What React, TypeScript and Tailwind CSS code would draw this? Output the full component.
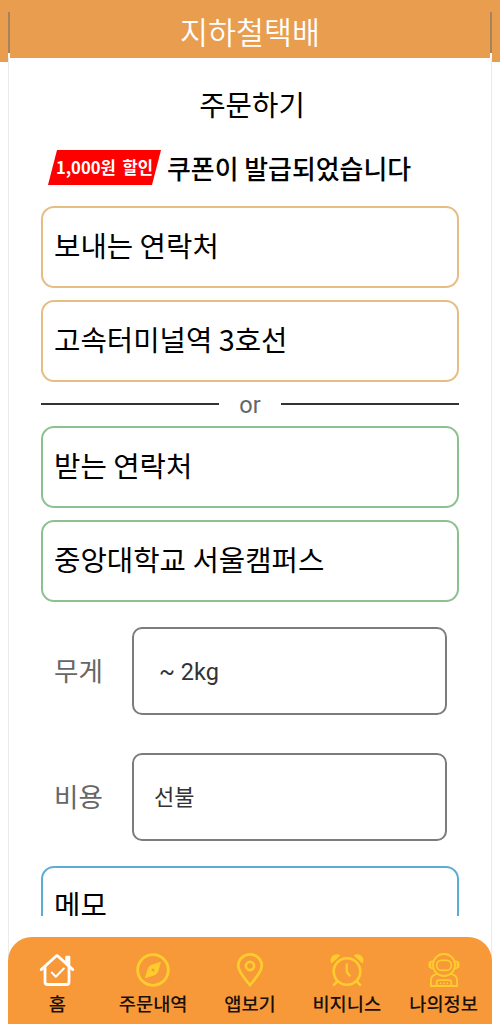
import React from 'react'
import { clsx } from 'clsx'

interface FieldProps {
  text: string
  className?: string
}

const Field: React.FC<FieldProps> = ({ text, className }) => (
  <div
    className={clsx(
      'flex h-[82px] shrink-0 items-center rounded-[13px] border-2 pb-[3px] pl-[11px] text-[28.7px] leading-none text-black',
      className
    )}
  >
    <span>{text}</span>
  </div>
)

interface OptionRowProps {
  label: string
  children: React.ReactNode
}

const OptionRow: React.FC<OptionRowProps> = ({ label, children }) => (
  <div className="flex h-[88px] items-center">
    <div className="w-[91px] pb-0.5 pl-[13px] text-[26.5px] leading-none text-[#666]">{label}</div>
    <div className="flex h-full w-[315px] items-center rounded-[10px] border-2 border-[#7c7c7c] text-[#333]">
      {children}
    </div>
  </div>
)

const HomeIcon = () => (
  <svg width="36" height="36" viewBox="0 0 36 36" fill="none" stroke="white" strokeLinecap="round" strokeLinejoin="round">
    <path d="M2.2 17.6 17 4.2a1.5 1.5 0 0 1 2 0L33.8 17.6" strokeWidth="2.8" />
    <path d="M6 15.5V30a2.5 2.5 0 0 0 2.5 2.5h19A2.5 2.5 0 0 0 30 30V15.5" strokeWidth="2.8" />
    <path d="M27.4 10V4.8h2.8v9" fill="white" strokeWidth="2.2" />
    <path d="m12.8 20.5 4 4.2 8-8.2" strokeWidth="2" />
  </svg>
)

const CompassIcon = () => (
  <svg width="36" height="36" viewBox="0 0 36 36" fill="none" stroke="#fdcc2d" strokeLinejoin="round">
    <circle cx="18" cy="18" r="15.3" strokeWidth="2.8" />
    <path
      d="M25.5 10.3 16.2 13.3a5 5 0 0 0-2.8 2.8L10.5 25.7l9.3-3a5 5 0 0 0 2.8-2.8z M18 16.1a1.9 1.9 0 1 0 0 3.8 1.9 1.9 0 0 0 0-3.8z"
      fill="#fdcc2d"
      fillRule="evenodd"
      strokeWidth="0.9"
    />
  </svg>
)

const PinIcon = () => (
  <svg width="36" height="36" viewBox="0 0 36 36" fill="none" stroke="#fdcc2d" strokeLinejoin="round">
    <path d="M18 33.2C14.5 28.5 6.2 20.2 6.2 13.8a11.8 11.4 0 0 1 23.6 0c0 6.4-8.3 14.7-11.8 19.4z" strokeWidth="2.7" />
    <circle cx="18" cy="14" r="4.1" strokeWidth="2.6" />
  </svg>
)

const AlarmIcon = () => (
  <svg width="36" height="36" viewBox="0 0 36 36" fill="none" stroke="#fdcc2d" strokeLinecap="round" strokeLinejoin="round">
    <circle cx="18" cy="19.5" r="13.3" strokeWidth="2.6" />
    <path d="M17.8 12.5V20l2.8 3.4" strokeWidth="2.4" />
    <path d="M2.7 10.5C1 6 5 1.5 10.3 3.5z M33.3 10.5C35 6 31 1.5 25.7 3.5z" fill="#fdcc2d" strokeWidth="1.4" />
    <path d="m8.2 29.5-3.2 3.3M27.8 29.5l3.2 3.3" strokeWidth="2.6" />
  </svg>
)

const AstronautIcon = () => (
  <svg width="36" height="36" viewBox="0 0 36 36" fill="none" stroke="#fdcc2d" strokeWidth="1.8" strokeLinecap="round" strokeLinejoin="round">
    <circle cx="18" cy="13" r="11" />
    <rect x="10.7" y="8.3" width="14.6" height="10" rx="4.6" />
    <path d="M7.4 9.3H6a1.5 1.5 0 0 0-1.5 1.5v4A1.5 1.5 0 0 0 6 16.3h1.4M28.6 9.3H30a1.5 1.5 0 0 1 1.5 1.5v4a1.5 1.5 0 0 1-1.5 1.5h-1.4M3.5 10.5v4.6M32.5 10.5v4.6" />
    <path d="M10.5 22.2c-3.2.7-5.6 3.2-5.6 6.4V34h26.2v-5.4c0-3.2-2.4-5.7-5.6-6.4" />
    <path d="M10.7 34v-4a1.8 1.8 0 0 1 1.8-1.8h11a1.8 1.8 0 0 1 1.8 1.8v4M14.7 31.2v.2M18 31.2v.2M21.3 31.2v.2" />
  </svg>
)

const navItems = [
  { label: '홈', icon: <HomeIcon /> },
  { label: '주문내역', icon: <CompassIcon /> },
  { label: '앱보기', icon: <PinIcon /> },
  { label: '비지니스', icon: <AlarmIcon /> },
  { label: '나의정보', icon: <AstronautIcon /> }
]

export default function App() {
  return (
    <div className="h-[1024px] w-[500px] overflow-hidden bg-white bg-linear-to-b from-[#e99d4e] from-[62px] to-white to-[62px] px-2 font-['Noto_Sans_CJK_KR',sans-serif]">
      <div className="flex h-full flex-col">
        <header className="flex h-[58px] shrink-0 pt-3">
          <div className="h-[46px] w-0.5 border-b-[5px] border-white bg-[#a5835f]" />
          <h1 className="flex-1 pt-[4px] text-center text-[30.4px] leading-[30px] font-[350] text-white">
            지하철택배
          </h1>
          <div className="h-[46px] w-0.5 border-b-[5px] border-white bg-[#a5835f]" />
        </header>

        <main className="flex min-h-0 flex-1 flex-col border-x border-[#ebebeb] bg-white">
          <div className="flex h-[858px] shrink-0 flex-col overflow-hidden px-8">
            <h2 className="h-[92px] shrink-0 pt-[30px] text-center text-[28.7px] leading-[32px] text-black">
              <span className="pl-1">주문하기</span>
            </h2>

            <div className="flex h-[56px] shrink-0 items-start pl-[7px]">
              <div className="flex h-[35px] w-[113px] items-center justify-center bg-[#fe0000] text-[16.6px] font-bold [word-spacing:3px] whitespace-nowrap text-white [clip-path:polygon(9px_0,100%_0,104px_100%,0_100%)]">
                1,000원 할인
              </div>
              <p className="pt-[2px] pl-[6px] text-[25.9px] leading-[32px] font-medium whitespace-nowrap text-black">
                쿠폰이 발급되었습니다
              </p>
            </div>

            <div className="flex shrink-0 flex-col gap-3">
              <Field text="보내는 연락처" className="border-[#e6bd82]" />
              <Field text="고속터미널역 3호선" className="border-[#e6bd82]" />
            </div>

            <div className="flex h-11 shrink-0 items-center">
              <div className="h-0.5 w-[178px] bg-[#333]" />
              <span className="flex-1 pt-[3px] text-center font-['Roboto',sans-serif] text-[23.5px] leading-none text-[#666]">
                or
              </span>
              <div className="h-0.5 w-[178px] bg-[#333]" />
            </div>

            <div className="flex shrink-0 flex-col gap-3">
              <Field text="받는 연락처" className="border-[#8fc091]" />
              <Field text="중앙대학교 서울캠퍼스" className="border-[#8fc091]" />
            </div>

            <div className="flex shrink-0 flex-col gap-[38px] py-[25px]">
              <OptionRow label="무게">
                <span className="pt-[3px] pl-[25px] font-['Roboto',sans-serif] text-[23.5px] leading-none">~ 2kg</span>
              </OptionRow>
              <OptionRow label="비용">
                <span className="pb-1 pl-[20px] text-[22px] leading-none">선불</span>
              </OptionRow>
            </div>

            <Field text="메모" className="border-[#5badd6] pb-[5px]" />
          </div>
        </main>

        <nav className="-mt-[87px] grid h-[87px] shrink-0 grid-cols-5 rounded-t-[24px] bg-[#f79939]">
          {navItems.map((item) => (
            <div key={item.label} className="flex flex-col items-center pt-[15px] first:pl-0.5">
              {item.icon}
              <span className="mt-[3px] text-[18.7px] leading-6 font-medium whitespace-nowrap text-[#1b1008]">
                {item.label}
              </span>
            </div>
          ))}
        </nav>
      </div>
    </div>
  )
}
